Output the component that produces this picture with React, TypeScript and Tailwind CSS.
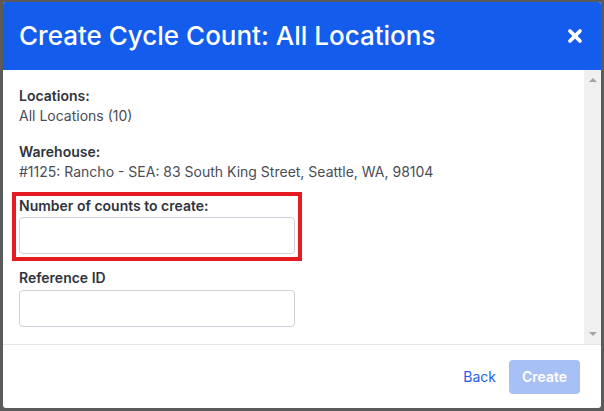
import { X } from "lucide-react";

function Field({ label, value }: { label: string; value: string }) {
  return (
    <div className="flex flex-col gap-[2px]">
      <div className="text-[14px] font-semibold leading-[18px] text-[#30343c]">{label}</div>
      <div className="text-[14px] leading-[18px] text-[#4a4d55]">{value}</div>
    </div>
  );
}

export default function App() {
  return (
    <div className="h-[411px] w-[604px] bg-[#5b5b5b] pl-[3px] pr-[3px] pt-[2px] pb-[3px] font-['Inter',sans-serif]">
      <div className="flex h-full flex-col overflow-hidden rounded-[3px] bg-white">
        <div className="flex h-[68px] shrink-0 items-center justify-between bg-[#145cec] pl-[16px] pr-[16px]">
          <h1 className="text-[26px] font-medium leading-none text-white">
            Create Cycle Count: All Locations
          </h1>
          <X className="h-[20px] w-[20px] text-white" strokeWidth={4.5} />
        </div>

        <div className="flex min-h-0 flex-1">
          <div className="flex flex-1 flex-col pl-[16px] pt-[17px]">
            <Field label="Locations:" value="All Locations (10)" />
            <div className="mt-[18px]">
              <Field
                label="Warehouse:"
                value="#1125: Rancho - SEA: 83 South King Street, Seattle, WA, 98104"
              />
            </div>

            <div className="mt-[11px] ml-[-7px] w-[290px] border-[4px] border-[#e61b22] px-[3px] pt-[1px] pb-[3px]">
              <div className="text-[14px] font-semibold leading-[18px] text-[#30343c]">
                Number of counts to create:
              </div>
              <input className="mt-[2px] h-[37px] w-[276px] rounded-[4px] border border-[#cfd1da] bg-white outline-none" />
            </div>

            <div className="mt-[8px] text-[14px] font-semibold leading-[18px] text-[#30343c]">
              Reference ID
            </div>
            <input className="mt-[3px] h-[37px] w-[276px] rounded-[4px] border border-[#cfd1da] bg-white outline-none" />
          </div>

          <div className="flex w-[17px] flex-col items-center justify-between bg-[#f0f0f0] py-[8px]">
            <div className="h-0 w-0 border-x-[4px] border-b-[4px] border-x-transparent border-b-[#a3a3a3]" />
            <div className="h-0 w-0 border-x-[4px] border-t-[4px] border-x-transparent border-t-[#a3a3a3]" />
          </div>
        </div>

        <div className="flex h-[64px] shrink-0 items-center justify-end gap-[13px] border-t border-[#e4e4e4] pr-[21px]">
          <button className="text-[14px] text-[#1f5fe6]">Back</button>
          <button className="h-[34px] w-[71px] rounded-[4px] bg-[#a7c0f6] text-[14px] font-semibold text-white">
            Create
          </button>
        </div>
      </div>
    </div>
  );
}
